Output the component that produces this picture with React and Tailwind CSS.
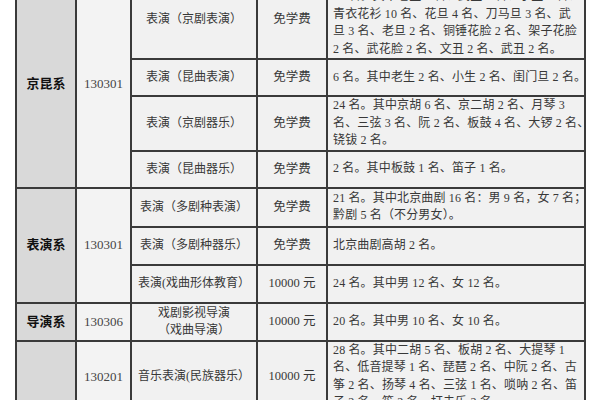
import React from "react";

const font = { fontFamily: '"Liberation Serif", "Noto Sans CJK SC", serif' };

const B = "border-2 border-[#3a3a3a]";

function Lines({ lines, lh = "leading-[17px]" }) {
  return (
    <div className={lh}>
      {lines.map((l, i) => (
        <div key={i} className="whitespace-nowrap">{l}</div>
      ))}
    </div>
  );
}

const rows = [
  {
    h: "h-[79px]",
    dept: { text: "京昆系", span: 4 },
    code: { text: "130301", span: 4 },
    major: ["表演（京剧表演）"],
    fee: "免学费",
    notePad: "pt-[8px] pb-0",
    note: [
      "33 名。其中老生 4 名、武生 2 名、小生 2 名、",
      "青衣花衫 10 名、花旦 4 名、刀马旦 3 名、武",
      "旦 3 名、老旦 2 名、铜锤花脸 2 名、架子花脸",
      "2 名、武花脸 2 名、文丑 2 名、武丑 2 名。",
    ],
  },
  { h: "h-[37px]", major: ["表演（昆曲表演）"], fee: "免学费", note: ["6 名。其中老生 2 名、小生 2 名、闺门旦 2 名。"] },
  {
    h: "h-[52px]",
    major: ["表演（京剧器乐）"],
    fee: "免学费",
    note: [
      "24 名。其中京胡 6 名、京二胡 2 名、月琴 3",
      "名、三弦 3 名、阮 2 名、板鼓 4 名、大锣 2 名、",
      "铙钹 2 名。",
    ],
  },
  { h: "h-[37px]", major: ["表演（昆曲器乐）"], fee: "免学费", note: ["2 名。其中板鼓 1 名、笛子 1 名。"] },
  {
    h: "h-[39px]",
    dept: { text: "表演系", span: 3 },
    code: { text: "130301", span: 3 },
    major: ["表演（多剧种表演）"],
    fee: "免学费",
    note: ["21 名。其中北京曲剧 16 名：男 9 名，女 7 名；", "黔剧 5 名（不分男女）。"],
  },
  { h: "h-[38px]", major: ["表演（多剧种器乐）"], fee: "免学费", note: ["北京曲剧高胡 2 名。"] },
  { h: "h-[38px]", major: ["表演(戏曲形体教育）"], fee: "10000 元", note: ["24 名。其中男 12 名、女 12 名。"] },
  {
    h: "h-[38px]",
    dept: { text: "导演系", span: 1 },
    code: { text: "130306", span: 1 },
    major: ["戏剧影视导演", "（戏曲导演）"],
    fee: "10000 元",
    note: ["20 名。其中男 10 名、女 10 名。"],
  },
  {
    h: "h-[72px]",
    dept: { text: "", span: 1 },
    code: { text: "130201", span: 1 },
    major: ["音乐表演(民族器乐）"],
    fee: "10000 元",
    note: [
      "28 名。其中二胡 5 名、板胡 2 名、大提琴 1",
      "名、低音提琴 1 名、琵琶 2 名、中阮 2 名、古",
      "筝 2 名、扬琴 4 名、三弦 1 名、唢呐 2 名、笛",
      "子 2 名、笙 2 名、打击乐 2 名。",
    ],
  },
];

export default function App() {
  return (
    <div className="w-[600px] h-[400px] overflow-hidden bg-white" style={font}>
      <table className="mt-[-22px] ml-[15px] border-collapse table-fixed w-[569px] text-[12px] text-[#383838]">
        <colgroup>
          <col className="w-[60px]" />
          <col className="w-[55px]" />
          <col className="w-[126px]" />
          <col className="w-[70px]" />
          <col className="w-[258px]" />
        </colgroup>
        <tbody>
          {rows.map((r, i) => (
            <tr key={i} className={r.h}>
              {r.dept && (
                <td rowSpan={r.dept.span} className={`${B} bg-[#d9d9d9] text-center align-middle font-bold text-[13px] text-[#111]`}>
                  {r.dept.text}
                </td>
              )}
              {r.code && (
                <td rowSpan={r.code.span} className={`${B} bg-[#f3f3f3] text-center align-middle text-[13px] text-[#444]`}>
                  {r.code.text}
                </td>
              )}
              <td className={`${B} bg-[#f1f1f1] text-center align-middle px-0`}>
                <Lines lines={r.major} />
              </td>
              <td className={`${B} bg-[#f1f1f1] text-center align-middle text-[12.5px]`}>{r.fee}</td>
              <td className={`${B} bg-[#f1f1f1] ${r.notePad ? "align-top " + r.notePad : "align-middle py-0"} pl-[5px] pr-1 tracking-[0.15px]`}>
                <Lines lines={r.note} lh="leading-[17.5px]" />
              </td>
            </tr>
          ))}
        </tbody>
      </table>
    </div>
  );
}
